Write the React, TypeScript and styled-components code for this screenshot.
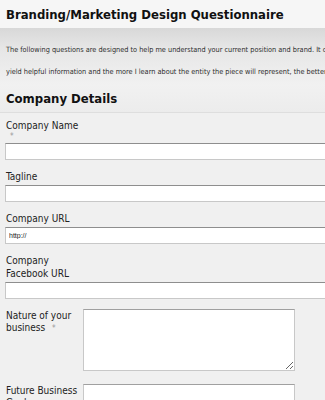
import React from "react";
import styled, { createGlobalStyle } from "styled-components";

const GlobalStyle = createGlobalStyle`
  html, body {
    margin: 0;
    padding: 0;
    overflow: hidden;
    background: #f0f0f0;
  }
  body {
    font-family: "DejaVu Sans Condensed", "DejaVu Sans", sans-serif;
    color: #333;
  }
`;

const Form = styled.div`
  width: 560px;
`;

const TitleBar = styled.div`
  height: 28px;
  padding: 0 6px;
  background: #f6f6f6;
  display: flex;
  align-items: center;
`;

const Title = styled.h1`
  margin: 0;
  font-size: 13px;
  font-weight: bold;
  color: #111;
  white-space: nowrap;
`;

const Intro = styled.div`
  height: 57px;
  padding: 11px 6px 0;
  box-sizing: border-box;
  background: linear-gradient(180deg, #d8d8d8 0%, #e6e6e6 35%, #f1f1f1 100%);
`;

const IntroText = styled.p`
  margin: 0;
  font-size: 7.3px;
  line-height: 22px;
  color: #2e2e2e;
  white-space: nowrap;
`;

const SectionHeader = styled.div`
  height: 27px;
  padding: 0 6px;
  display: flex;
  align-items: center;
  background: linear-gradient(180deg, #f1f1f1 0%, #ececec 100%);
  border-bottom: 1px solid #dedede;
`;

const SectionTitle = styled.h2`
  margin: 0;
  font-size: 13px;
  font-weight: bold;
  color: #111;
`;

const Fields = styled.div`
  display: flex;
  flex-direction: column;
  padding: 6px 0 0 5px;
`;

const TopField = styled.div`
  display: flex;
  flex-direction: column;
  margin-bottom: 10px;
`;

const SideField = styled.div`
  display: flex;
  align-items: flex-start;
  margin-bottom: 13px;
`;

const Label = styled.label<{ $side?: boolean }>`
  font-size: 10px;
  color: #222;
  padding-left: 1px;
  ${(p) =>
    p.$side
      ? "width: 77px; line-height: 12px; padding-top: 1px;"
      : "width: 80px; line-height: 13px; margin-bottom: 2px;"}
`;

const Required = styled.span<{ $block?: boolean }>`
  color: #999;
  font-size: 8px;
  margin-left: 4px;
  ${(p) => (p.$block ? "display: block; line-height: 9px;" : "display: inline-block;")}
`;

const Input = styled.input`
  display: block;
  width: 420px;
  height: 17px;
  box-sizing: border-box;
  border: 1px solid #c8c8c8;
  border-top-color: #8e8e8e;
  background: #fff;
  padding: 0 3px;
  font-family: "Liberation Sans", sans-serif;
  font-size: 7px;
  color: #222;
  outline: none;
  margin: 0;
`;

const TextArea = styled.textarea`
  display: block;
  width: 212px;
  height: 62px;
  box-sizing: border-box;
  border: 1px solid #c8c8c8;
  border-top-color: #a0a0a0;
  background: #fff;
  resize: vertical;
  outline: none;
  margin: 0;
`;

export default function App() {
  return (
    <>
      <GlobalStyle />
      <Form>
        <TitleBar>
          <Title>Branding/Marketing Design Questionnaire</Title>
        </TitleBar>
        <Intro>
          <IntroText>
            The following questions are designed to help me understand your current position and brand. It can be
            a bit time consuming, but the information will
            <br />
            yield helpful information and the more I learn about the entity the piece will represent, the better the
            final result will be.
          </IntroText>
        </Intro>
        <SectionHeader>
          <SectionTitle>Company Details</SectionTitle>
        </SectionHeader>
        <Fields>
          <TopField>
            <Label>
              Company Name
              <Required $block>*</Required>
            </Label>
            <Input />
          </TopField>
          <TopField>
            <Label>Tagline</Label>
            <Input />
          </TopField>
          <TopField>
            <Label>Company URL</Label>
            <Input defaultValue="http://" />
          </TopField>
          <TopField>
            <Label>
              Company
              <br />
              Facebook URL
            </Label>
            <Input />
          </TopField>
          <SideField>
            <Label $side>
              Nature of your business <Required>*</Required>
            </Label>
            <TextArea />
          </SideField>
          <SideField>
            <Label $side>Future Business Goals</Label>
            <TextArea />
          </SideField>
        </Fields>
      </Form>
    </>
  );
}
